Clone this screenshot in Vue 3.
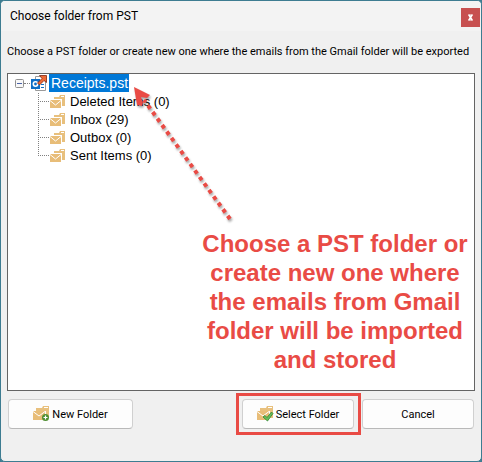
<template>
  <div class="dialog">
    <header class="title-bar">
      <h1>Choose folder from PST</h1>
      <button class="close-btn" aria-label="Close">
        <svg width="7" height="7" viewBox="0 0 7 7">
          <path d="M1 1h5M1 6h5" stroke="#fff" />
          <path d="M2 1l3 5M5 1L2 6" stroke="#fff" stroke-width="1.6" />
        </svg>
      </button>
    </header>

    <main class="content">
      <p class="message">Choose a PST folder or create new one where the emails from the Gmail folder will be exported</p>

      <div class="tree">
        <div class="root-row">
          <button class="toggle" aria-label="Collapse" @click="expanded = !expanded">
            <svg width="9" height="9" viewBox="0 0 9 9">
              <rect x=".5" y=".5" width="8" height="8" rx="1" fill="#f8f8f8" stroke="#919191" />
              <path d="M2 4.5h5" stroke="#4b63a7" />
              <path v-if="!expanded" d="M4.5 2v5" stroke="#4b63a7" />
            </svg>
          </button>
          <span class="dots"></span>
          <svg class="pst-icon" width="16" height="16" viewBox="0 0 16 16">
            <path d="M4.5 1.5h10v14h-10z" fill="#fff" stroke="#9a9a9a" />
            <path d="M10 9.5h3M10 12.5h3" stroke="#0f6fc6" />
            <path d="M0 4h9v10H0z" fill="#0f6fc6" />
            <circle cx="4.5" cy="9" r="2.2" fill="none" stroke="#fff" stroke-width="1.6" />
            <path d="M8.5.5h7v7L13 5.5 8.5 10l-2-2L11 3.5z" fill="#ee6a35" stroke="#7d2612" stroke-width=".8" />
          </svg>
          <span class="root-label">Receipts.pst</span>
        </div>
        <ul v-if="expanded" class="folders">
          <li v-for="folder in folders" :key="folder.name">
            <svg class="folder-icon" width="16" height="14" viewBox="0 0 16 14">
              <path d="M4 4V2h5l1-2h5v11h-3V4z" fill="#e8c07d" />
              <path d="M11 1.5h3" stroke="#fff" />
              <path d="M0 5h11v8H0z" fill="#e8bd78" />
              <path d="M0 5.5L5.5 10 11 5.5" fill="none" stroke="#fff" />
            </svg>
            <span>{{ folder.name }} ({{ folder.count }})</span>
          </li>
        </ul>

        <svg class="arrow" width="110" height="150" viewBox="0 0 110 150">
          <path d="M100 136L14 17" stroke="#e94b45" stroke-width="4" stroke-dasharray="4 4" />
          <path d="M4 4l16 8-3 3-6-1 2 6-1 3-5-1z" fill="#e94b45" />
        </svg>
        <p class="callout">Choose a PST folder or create new one where the emails from Gmail folder will be imported and stored</p>
      </div>

      <footer class="actions">
        <button class="btn btn-new">
          <svg width="17" height="16" viewBox="0 0 17 16">
            <path d="M3 5V2h6l1-2h6v12h-3V5z" fill="#e8c07d" />
            <path d="M11 1.5h4" stroke="#fff" />
            <path d="M0 5h12v9H0z" fill="#e8bd78" />
            <path d="M0 5.5L6 10l6-4.5" fill="none" stroke="#fff" />
            <circle cx="12.5" cy="11.5" r="3.5" fill="#4f8f32" />
            <path d="M12.5 9.5v4M10.5 11.5h4" stroke="#fff" stroke-width="1.2" />
          </svg>
          New Folder
        </button>
        <div class="highlight">
          <button class="btn btn-select">
            <svg width="17" height="16" viewBox="0 0 17 16">
              <path d="M3 5V2h6l1-2h6v12h-3V5z" fill="#e8c07d" />
              <path d="M11 1.5h4" stroke="#fff" />
              <path d="M0 5h12v9H0z" fill="#e8bd78" />
              <path d="M0 5.5L6 10l6-4.5" fill="none" stroke="#fff" />
              <path d="M6 11l2-1.5 2 2L14.5 6 16 7.5 10.5 15z" fill="#65bd5b" stroke="#348431" stroke-width=".8" />
            </svg>
            Select Folder
          </button>
        </div>
        <button class="btn btn-cancel">Cancel</button>
      </footer>
    </main>
  </div>
</template>

<script setup>
import { ref } from 'vue';

const expanded = ref(true);

const folders = ref([
  { name: 'Deleted Items', count: 0 },
  { name: 'Inbox', count: 29 },
  { name: 'Outbox', count: 0 },
  { name: 'Sent Items', count: 0 },
]);
</script>

<style>
body {
  background: #3d7c91;
}
</style>

<style scoped>
.dialog {
  box-sizing: border-box;
  display: flex;
  flex-direction: column;
  min-height: 100vh;
  border: 1px solid #3d7c91;
  border-radius: 5px;
  background: #f0f0f0;
  color: #000;
  font-family: Roboto, sans-serif;
  font-size: 11px;
}

.title-bar {
  display: flex;
  align-items: center;
  justify-content: space-between;
  height: 30px;
  padding: 0 1px 0 9px;
  border-radius: 4px 4px 0 0;
  background: #f3f3f3;
}

h1 {
  margin: 0;
  font-size: 12px;
  font-weight: 400;
}

.close-btn {
  display: flex;
  align-items: center;
  justify-content: center;
  width: 19px;
  height: 19px;
  margin-top: 3px;
  padding: 0;
  border: none;
  background: #c75050;
}

.content {
  display: flex;
  flex: 1;
  flex-direction: column;
  padding: 12px 6px 26px;
}

.message {
  margin: 0;
  line-height: 18px;
  white-space: nowrap;
}

.tree {
  position: relative;
  flex: 1;
  margin-top: 12px;
  border: 1px solid #646464;
  background: #fff;
  font-family: "Liberation Sans", sans-serif;
  font-size: 13px;
  line-height: 18px;
}

.root-row {
  display: flex;
  align-items: center;
  height: 18px;
  padding-left: 7px;
}

.toggle {
  display: flex;
  padding: 0;
  border: none;
  background: none;
}

.dots {
  width: 6px;
  border-top: 1px dotted #808080;
}

.pst-icon {
  margin-left: 1px;
}

.root-label {
  margin-left: 2px;
  padding: 0 1px 0 2px;
  background: #0078d7;
  color: #fff;
  font-size: 14px;
}

.folders {
  margin: 1px 0 0 30px;
  padding: 0;
  list-style: none;
}

.folders li {
  display: flex;
  align-items: center;
  height: 18px;
  background:
    repeating-linear-gradient(#808080 0 1px, transparent 1px 2px) 0 0 / 1px 100% no-repeat,
    repeating-linear-gradient(90deg, #808080 0 1px, transparent 1px 2px) 0 8px / 11px 1px no-repeat;
}

.folders li:last-child {
  background-size: 1px 9px, 11px 1px;
}

.folder-icon {
  margin: 0 4px 0 12px;
}

.arrow {
  position: absolute;
  top: 9px;
  left: 122px;
  filter: drop-shadow(1px 2px 1px rgba(0, 0, 0, 0.35));
}

.callout {
  position: absolute;
  top: 155px;
  right: 5px;
  width: 268px;
  margin: 0;
  color: #e94b45;
  font-size: 24px;
  font-weight: 700;
  line-height: 29px;
  text-align: center;
}

.actions {
  display: flex;
  align-items: center;
  margin-top: 2px;
}

.btn {
  display: flex;
  align-items: center;
  justify-content: center;
  gap: 2px;
  height: 30px;
  padding: 0;
  border: 1px solid #d0d0d0;
  border-bottom-color: #b9b9b9;
  border-radius: 4px;
  background: #fdfdfd;
  color: #000;
  font-family: inherit;
  font-size: 11px;
}

.btn-new {
  width: 125px;
  margin-right: auto;
  margin-left: 1px;
}

.highlight {
  padding: 3px 4px 3px 3px;
  border: 3px solid #e94b45;
}

.btn-select,
.btn-cancel {
  width: 112px;
}

.btn-cancel {
  margin: 0 1px;
}
</style>
